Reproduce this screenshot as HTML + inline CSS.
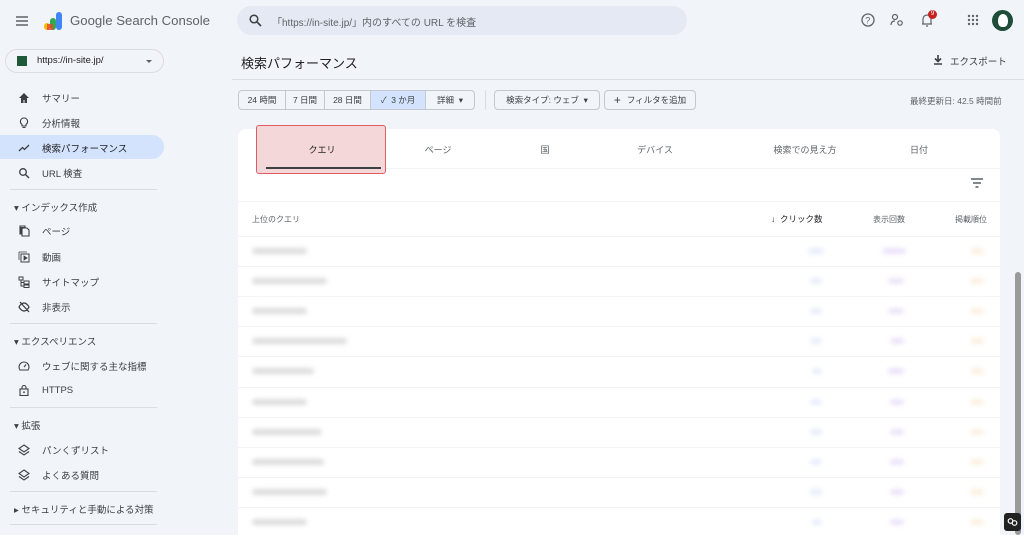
<!DOCTYPE html>
<html><head><meta charset="utf-8"><style>
*{margin:0;padding:0;box-sizing:border-box}
html,body{width:1024px;height:535px;overflow:hidden}
body{background:#f1f4f9;font-family:"Liberation Sans","Noto Sans CJK JP",sans-serif;color:#3c4043;position:relative}
.a{position:absolute}
.t{font-size:9.5px;color:#3c4043;white-space:nowrap}
.nav{position:absolute;left:18px;font-size:9.5px;color:#3c4043;display:flex;align-items:center;white-space:nowrap}
.nav svg{width:12px;height:12px;margin-right:12px}
.hr{position:absolute;left:10px;width:147px;height:1px;background:#dadce0}
.sec{position:absolute;left:14px;font-size:9.5px;color:#3c4043;white-space:nowrap}
.btn{position:absolute;top:90px;height:20px;border:1px solid #c4c7cc;font-size:8.5px;color:#3c4043;display:flex;align-items:center;justify-content:center;white-space:nowrap;background:#f1f4f9}
.tab{position:absolute;top:143px;font-size:9px;color:#5f6368;text-align:center;width:120px}
.row{position:absolute;left:238px;width:762px;height:1px;background:#f3f4f5}
.bl{position:absolute;height:6px;border-radius:3px;filter:blur(2.5px)}
.q{background:#dcdcdc}
.c{background:#e6edfb}.i{background:#ebe3f9}.p{background:#fcf0e0}
</style></head><body>
<svg class="a" style="left:15px;top:15px" width="14" height="12"><path d="M1 2h12M1 6h12M1 10h12" stroke="#5f6368" stroke-width="1.5"/></svg>
<svg class="a" style="left:42px;top:10px" width="22" height="22"><rect x="14" y="2" width="6" height="18" rx="3" fill="#4285f4"/><rect x="8" y="8" width="6" height="12" rx="3" fill="#34a853"/><rect x="2" y="13" width="6" height="7" rx="3" fill="#fbbc04"/><rect x="5" y="14" width="6" height="6" fill="#ea4335" opacity=".8"/></svg>
<div class="a" style="left:70px;top:13px;font-size:13.2px;color:#5f6368">Google Search Console</div>
<div class="a" style="left:237px;top:6px;width:450px;height:29px;border-radius:15px;background:#e4e9f3"></div>
<svg class="a" style="left:249px;top:14px" width="13" height="13"><circle cx="5" cy="5" r="3.8" stroke="#3c4043" stroke-width="1.5" fill="none"/><path d="M8 8l4 4" stroke="#3c4043" stroke-width="1.6"/></svg>
<div class="a t" style="left:272px;top:14px;font-size:10px;color:#5f6368">「https://in-site.jp/」内のすべての URL を検査</div>
<svg class="a" style="left:861px;top:13px" width="14" height="14"><circle cx="7" cy="7" r="6" stroke="#5f6368" stroke-width="1.3" fill="none"/><text x="4.3" y="10.5" font-size="9" fill="#5f6368" font-family="Liberation Sans">?</text></svg>
<svg class="a" style="left:890px;top:13px" width="14" height="14"><circle cx="5" cy="4" r="2.5" stroke="#5f6368" stroke-width="1.2" fill="none"/><path d="M1 12c0-3 2-4 4-4" stroke="#5f6368" stroke-width="1.2" fill="none"/><circle cx="10" cy="10" r="2.2" stroke="#5f6368" stroke-width="1.2" fill="none"/></svg>
<svg class="a" style="left:920px;top:13px" width="14" height="14"><path d="M3 11V6a4 4 0 0 1 8 0v5zM2 11h10M6 13h2" stroke="#5f6368" stroke-width="1.2" fill="none"/></svg>
<div class="a" style="left:928px;top:10px;width:9px;height:9px;border-radius:50%;background:#c5221f;color:#fff;font-size:6px;text-align:center;line-height:9px">9</div>
<svg class="a" style="left:967px;top:14px" width="12" height="12"><g fill="#5f6368"><circle cx="2" cy="2" r="1.2"/><circle cx="6" cy="2" r="1.2"/><circle cx="10" cy="2" r="1.2"/><circle cx="2" cy="6" r="1.2"/><circle cx="6" cy="6" r="1.2"/><circle cx="10" cy="6" r="1.2"/><circle cx="2" cy="10" r="1.2"/><circle cx="6" cy="10" r="1.2"/><circle cx="10" cy="10" r="1.2"/></g></svg>
<div class="a" style="left:992px;top:10px;width:21px;height:21px;border-radius:50%;background:#1e4d3a"></div>
<div class="a" style="left:998px;top:14px;width:10px;height:13px;border-radius:50% 50% 40% 40%;background:#fff"></div>
<div class="a" style="left:5px;top:49px;width:159px;height:24px;border:1px solid #dadce0;border-radius:12px"></div>
<div class="a" style="left:17px;top:56px;width:10px;height:10px;background:#1e5a3a"></div>
<div class="a t" style="left:37px;top:55px;font-size:9.5px;color:#202124">https://in-site.jp/</div>
<div class="a" style="left:146px;top:60px;border-left:3px solid transparent;border-right:3px solid transparent;border-top:3px solid #5f6368"></div>
<div class="a" style="left:0;top:135px;width:164px;height:24px;background:#d3e3fd;border-radius:0 12px 12px 0"></div>
<div class="nav" style="top:91px"><svg viewBox="0 0 12 12"><path d="M6 1L1 6h2v5h2.5V8h1v3H9V6h2z" fill="#3c4043"/></svg>サマリー</div>
<div class="nav" style="top:116px"><svg viewBox="0 0 12 12"><path d="M6 1a3.5 3.5 0 0 0-2 6.4V9h4V7.4A3.5 3.5 0 0 0 6 1zM4.5 10.5h3" stroke="#3c4043" stroke-width="1.1" fill="none"/></svg>分析情報</div>
<div class="nav" style="top:141px;color:#202124"><svg viewBox="0 0 12 12"><path d="M1 9l3.5-3.5 2 2L11 3" stroke="#3c4043" stroke-width="1.3" fill="none"/></svg>検索パフォーマンス</div>
<div class="nav" style="top:166px"><svg viewBox="0 0 12 12"><circle cx="5" cy="5" r="3.3" stroke="#3c4043" stroke-width="1.3" fill="none"/><path d="M7.5 7.5L11 11" stroke="#3c4043" stroke-width="1.4"/></svg>URL 検査</div>
<div class="hr" style="top:189px"></div>
<div class="sec" style="top:200px">▾ インデックス作成</div>
<div class="nav" style="top:224px"><svg viewBox="0 0 12 12"><path d="M4 3h5l2 2v6H4zM2 1h5v1.5H3V9H2z" stroke="#3c4043" stroke-width="1.1" fill="none"/></svg>ページ</div>
<div class="nav" style="top:250px"><svg viewBox="0 0 12 12"><rect x="3" y="3" width="8" height="8" stroke="#3c4043" fill="none"/><path d="M1 1v8M1 1h8M6 5v4l3-2z" stroke="#3c4043" fill="#3c4043" stroke-width=".8"/></svg>動画</div>
<div class="nav" style="top:275px"><svg viewBox="0 0 12 12"><rect x="1" y="1" width="4" height="3" stroke="#3c4043" fill="none"/><rect x="6" y="5" width="5" height="3" stroke="#3c4043" fill="none"/><rect x="6" y="9" width="5" height="2.5" stroke="#3c4043" fill="none"/><path d="M3 4v6h3M3 6.5h3" stroke="#3c4043" fill="none"/></svg>サイトマップ</div>
<div class="nav" style="top:300px"><svg viewBox="0 0 12 12"><path d="M1 6s2-4 5-4 5 4 5 4-2 4-5 4-5-4-5-4zM2 1l9 10" stroke="#3c4043" stroke-width="1.3" fill="none"/></svg>非表示</div>
<div class="hr" style="top:323px"></div>
<div class="sec" style="top:334px">▾ エクスペリエンス</div>
<div class="nav" style="top:359px"><svg viewBox="0 0 12 12"><path d="M2 10A5 5 0 1 1 10 10zM6 7l2-2.5" stroke="#3c4043" stroke-width="1.1" fill="none"/></svg>ウェブに関する主な指標</div>
<div class="nav" style="top:384px"><svg viewBox="0 0 12 12"><rect x="2" y="5" width="8" height="6.5" stroke="#3c4043" stroke-width="1.1" fill="none"/><path d="M4 5V3.5a2 2 0 0 1 4 0V5" stroke="#3c4043" stroke-width="1.1" fill="none"/><circle cx="6" cy="8.2" r=".9" fill="#3c4043"/></svg>HTTPS</div>
<div class="hr" style="top:407px"></div>
<div class="sec" style="top:418px">▾ 拡張</div>
<div class="nav" style="top:443px"><svg viewBox="0 0 12 12"><path d="M6 1l5 3.5-5 3.5-5-3.5zM1 7.5L6 11l5-3.5" stroke="#3c4043" stroke-width="1.1" fill="none"/></svg>パンくずリスト</div>
<div class="nav" style="top:468px"><svg viewBox="0 0 12 12"><path d="M6 1l5 3.5-5 3.5-5-3.5zM1 7.5L6 11l5-3.5" stroke="#3c4043" stroke-width="1.1" fill="none"/></svg>よくある質問</div>
<div class="hr" style="top:491px"></div>
<div class="sec" style="top:502px">▸ セキュリティと手動による対策</div>
<div class="hr" style="top:524px"></div>
<div class="a" style="left:241px;top:53px;font-size:13px;color:#202124">検索パフォーマンス</div>
<svg class="a" style="left:933px;top:54px" width="10" height="12"><path d="M5 1v6M2 4.5L5 7.5 8 4.5M1 10h8" stroke="#3c4043" stroke-width="1.6" fill="none"/></svg>
<div class="a t" style="left:950px;top:54px;font-size:9.5px">エクスポート</div>
<div class="a" style="left:232px;top:79px;width:792px;height:1px;background:#dadce0"></div>
<div class="btn" style="left:238px;width:48px;border-radius:4px 0 0 4px">24 時間</div>
<div class="btn" style="left:285px;width:40px">7 日間</div>
<div class="btn" style="left:324px;width:47px">28 日間</div>
<div class="btn" style="left:370px;width:56px;background:#d3e3fd">✓&nbsp; 3 か月</div>
<div class="btn" style="left:425px;width:50px;border-radius:0 4px 4px 0">詳細 &nbsp;▾</div>
<div class="a" style="left:485px;top:90px;width:1px;height:20px;background:#dadce0"></div>
<div class="btn" style="left:494px;width:106px;border-radius:4px">検索タイプ: ウェブ &nbsp;▾</div>
<div class="btn" style="left:604px;width:92px;border-radius:4px"><span style="font-size:12px;margin-right:6px">+</span>フィルタを追加</div>
<div class="a t" style="left:910px;top:95px;font-size:8.5px;color:#5f6368">最終更新日: 42.5 時間前</div>
<div class="a" style="left:238px;top:129px;width:762px;height:406px;background:#fff;border-radius:8px 8px 0 0"></div>
<div class="a" style="left:256px;top:125px;width:130px;height:49px;background:#f4d7d8;border:1.5px solid #e05c63;border-radius:3px"></div>
<div class="a" style="left:266px;top:167px;width:115px;height:2px;background:#3c4043"></div>
<div class="tab" style="left:262px;color:#202124">クエリ</div>
<div class="tab" style="left:378px">ページ</div>
<div class="tab" style="left:485px">国</div>
<div class="tab" style="left:595px">デバイス</div>
<div class="tab" style="left:745px">検索での見え方</div>
<div class="tab" style="left:859px">日付</div>
<div class="row" style="top:168px;left:386px;width:614px"></div>
<svg class="a" style="left:971px;top:178px" width="12" height="10"><path d="M0 1h12M2 5h8M4.5 9h3" stroke="#3c4043" stroke-width="1.3"/></svg>
<div class="row" style="top:201px"></div>
<div class="a t" style="left:252px;top:214px;font-size:8px;color:#5f6368">上位のクエリ</div>
<div class="a t" style="left:771px;top:213px;font-size:8.5px;color:#202124">↓&nbsp; クリック数</div>
<div class="a t" style="left:873px;top:214px;font-size:8px;color:#5f6368">表示回数</div>
<div class="a t" style="left:955px;top:214px;font-size:8px;color:#5f6368">掲載順位</div>
<div class="row" style="top:236px"></div>
<div class="row" style="top:266px"></div><div class="row" style="top:296px"></div><div class="row" style="top:326px"></div><div class="row" style="top:356px"></div><div class="row" style="top:387px"></div><div class="row" style="top:417px"></div><div class="row" style="top:447px"></div><div class="row" style="top:477px"></div><div class="row" style="top:507px"></div>
<div class="bl q" style="left:252px;top:248px;width:55px"></div>
<div class="bl q" style="left:252px;top:278px;width:75px"></div>
<div class="bl q" style="left:252px;top:308px;width:55px"></div>
<div class="bl q" style="left:252px;top:338px;width:95px"></div>
<div class="bl q" style="left:252px;top:368px;width:62px"></div>
<div class="bl q" style="left:252px;top:399px;width:55px"></div>
<div class="bl q" style="left:252px;top:429px;width:70px"></div>
<div class="bl q" style="left:252px;top:459px;width:72px"></div>
<div class="bl q" style="left:252px;top:489px;width:75px"></div>
<div class="bl q" style="left:252px;top:519px;width:55px"></div>
<div class="bl c" style="left:808px;top:248px;width:16px"></div><div class="bl i" style="left:882px;top:248px;width:24px"></div><div class="bl p" style="left:970px;top:248px;width:14px"></div>
<div class="bl c" style="left:810px;top:278px;width:12px"></div><div class="bl i" style="left:888px;top:278px;width:16px"></div><div class="bl p" style="left:970px;top:278px;width:14px"></div>
<div class="bl c" style="left:810px;top:308px;width:12px"></div><div class="bl i" style="left:888px;top:308px;width:16px"></div><div class="bl p" style="left:970px;top:308px;width:14px"></div>
<div class="bl c" style="left:810px;top:338px;width:12px"></div><div class="bl i" style="left:890px;top:338px;width:14px"></div><div class="bl p" style="left:970px;top:338px;width:14px"></div>
<div class="bl c" style="left:812px;top:368px;width:10px"></div><div class="bl i" style="left:888px;top:368px;width:16px"></div><div class="bl p" style="left:970px;top:368px;width:14px"></div>
<div class="bl c" style="left:810px;top:399px;width:12px"></div><div class="bl i" style="left:890px;top:399px;width:14px"></div><div class="bl p" style="left:970px;top:399px;width:14px"></div>
<div class="bl c" style="left:810px;top:429px;width:12px"></div><div class="bl i" style="left:890px;top:429px;width:14px"></div><div class="bl p" style="left:970px;top:429px;width:14px"></div>
<div class="bl c" style="left:810px;top:459px;width:12px"></div><div class="bl i" style="left:890px;top:459px;width:14px"></div><div class="bl p" style="left:970px;top:459px;width:14px"></div>
<div class="bl c" style="left:810px;top:489px;width:12px"></div><div class="bl i" style="left:890px;top:489px;width:14px"></div><div class="bl p" style="left:970px;top:489px;width:14px"></div>
<div class="bl c" style="left:812px;top:519px;width:10px"></div><div class="bl i" style="left:890px;top:519px;width:14px"></div><div class="bl p" style="left:970px;top:519px;width:14px"></div>
<div class="a" style="left:1015px;top:272px;width:6px;height:263px;border-radius:3px;background:#9a9a9a"></div>
<div class="a" style="left:1004px;top:513px;width:17px;height:18px;border-radius:3px;background:#222"></div>
<svg class="a" style="left:1007px;top:517px" width="11" height="10"><circle cx="3.5" cy="4" r="2.3" stroke="#fff" fill="none" stroke-width="1.2"/><circle cx="7.5" cy="6" r="2.3" stroke="#fff" fill="none" stroke-width="1.2"/></svg>
</body></html>
